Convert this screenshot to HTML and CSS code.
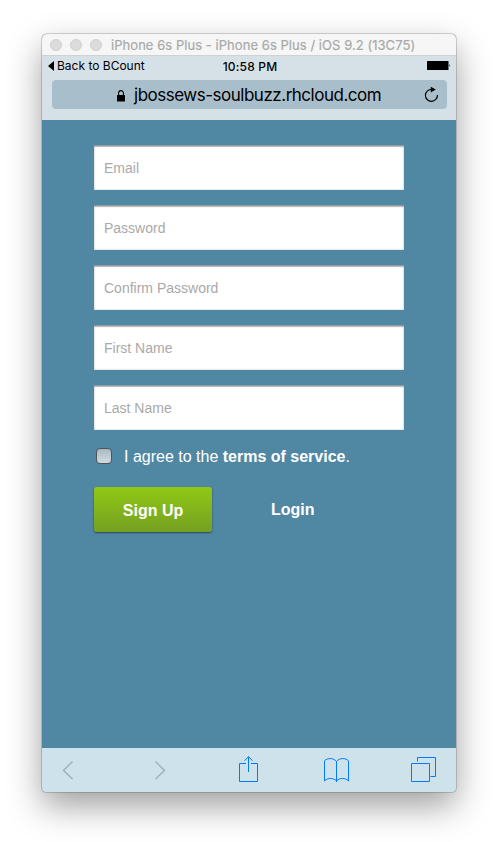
FILE: index.html
```
<!DOCTYPE html>
<html lang="en">
<head>
<meta charset="utf-8">
<title>Sign Up</title>
<link rel="stylesheet" href="styles.css">
</head>
<body>
<main class="phone">
  <header class="titlebar">
    <i class="dot"></i><i class="dot"></i><i class="dot"></i>
    <span class="title">iPhone 6s Plus - iPhone 6s Plus / iOS 9.2 (13C75)</span>
  </header>
  <section class="browser">
    <div class="status">
      <div class="back"><svg width="6" height="10" viewBox="0 0 6 10"><path d="M6 0v10L0 5z"/></svg><span>Back to BCount</span></div>
      <span class="time">10:58 PM</span>
      <svg class="battery" width="24" height="9" viewBox="0 0 24 9"><rect width="21.5" height="9" rx=".5"/><path d="M22.5 3q1.500 1.500 0 3z"/></svg>
    </div>
    <div class="address">
      <svg class="lock" width="8" height="12" viewBox="0 0 8 12"><rect y="5" width="8" height="6.500" rx=".5"/><path d="M1.600 5.500V3a2.400 2.400 0 0 1 4.800 0v2.500" fill="none" stroke="#000" stroke-width="1.1"/></svg>
      <span class="url">jbossews-soulbuzz.rhcloud.com</span>
      <svg class="reload" width="15" height="17" viewBox="0 0 15 17"><path d="M8 3.400A6 6 0 1 0 13.400 9" fill="none" stroke="#000" stroke-width="1.2"/><path d="M6.800 0.800 11.800 3.600 6.800 6.400z"/></svg>
    </div>
  </section>
  <form class="form">
    <input class="field" type="text" placeholder="Email">
    <input class="field" type="text" placeholder="Password">
    <input class="field" type="text" placeholder="Confirm Password">
    <input class="field" type="text" placeholder="First Name">
    <input class="field" type="text" placeholder="Last Name">
    <label class="agree"><input class="check" type="checkbox"><span class="terms">I agree to the <b>terms of service</b>.</span></label>
    <div class="actions">
      <button class="signup" type="button">Sign Up</button>
      <a class="login">Login</a>
    </div>
  </form>
  <nav class="toolbar">
    <svg class="icon muted" width="12" height="20" viewBox="0 0 12 20"><path d="M10.500 1.500 1.500 10.500 10.500 19"/></svg>
    <svg class="icon muted forward" width="12" height="20" viewBox="0 0 12 20"><path d="M1.500 1.500 10.500 10.500 1.500 19"/></svg>
    <svg class="icon share" width="19" height="26" viewBox="0 0 19 26"><path d="M7 7.500H.5v18h18v-18H12M9.500 16V.7M5.500 4.700l4-4 4 4"/></svg>
    <svg class="icon book" width="25" height="26" viewBox="0 0 25 26"><path d="M12.500 5.500C9.500 1.700 3.500 1.700.5 4.800v20.200c3-3.400 9-3.400 12 0 3-3.400 9-3.400 12 0V4.800c-3-3.100-9-3.100-12 .7zV26"/></svg>
    <svg class="icon tabs" width="25" height="26" viewBox="0 0 25 26"><path d="M.5 7.500h18v18H.5zM6.500 5.500v-4h18v19h-5"/></svg>
  </nav>
</main>
</body>
</html>
```
FILE: styles.css
```
* { box-sizing: border-box; }
body {
  margin: 0;
  padding: 34px 42px 0;
  height: 842px;
  overflow: hidden;
  background: #fff;
  font-family: "Liberation Sans", Arial, sans-serif;
}
svg { display: block; flex: none; }
.phone {
  width: 414px;
  height: 758px;
  border-radius: 5px 5px 4px 4px;
  background: #5088a4;
  box-shadow: 0 0 0 1px rgba(0,0,0,.16), 0 14px 34px rgba(0,0,0,.38);
  display: flex;
  flex-direction: column;
}
.titlebar {
  height: 22px;
  background: #f6f6f6;
  border-bottom: 1px solid #d1d1d1;
  border-radius: 5px 5px 0 0;
  display: flex;
  align-items: center;
  padding-left: 8px;
}
.dot {
  width: 12px;
  height: 12px;
  margin-right: 8px;
  border-radius: 50%;
  background: #dcdcdc;
  border: 1px solid #d0d0d0;
}
.title {
  margin: 2px 0 0 1px;
  font: 13px/21px Inter, sans-serif;
  color: #a9a9a9;
  white-space: nowrap;
  letter-spacing: .05px;
  -webkit-text-stroke: .2px #a9a9a9;
}
.browser {
  height: 64px;
  background: #d6e1e7;
  font-family: Inter, sans-serif;
  color: #000;
}
.status {
  height: 20px;
  display: grid;
  grid-template-columns: 1fr auto 1fr;
  align-items: center;
  padding: 0 5px 0 6px;
  font-size: 12px;
}
.back { display: flex; align-items: center; gap: 3px; white-space: nowrap; }
.back span { padding-bottom: 2px; }
.time { font-weight: 500; letter-spacing: .17px; padding: 1px 0 0 1px; }
.battery { justify-self: end; margin-bottom: 1px; }
.address {
  height: 29px;
  margin: 4px 9px 0 10px;
  padding: 0 8px 0 65px;
  border-radius: 4px;
  background: #a9becb;
  display: flex;
  align-items: center;
}
.lock { margin-top: 2px; }
.url { margin: 1px 0 0 9px; font-size: 17px; letter-spacing: -.49px; white-space: nowrap; }
.reload { margin-left: auto; }
.form {
  height: 628px;
  padding: 26px 52px 0;
  display: flex;
  flex-direction: column;
}
.field {
  width: 310px;
  height: 44px;
  margin: 0 0 16px;
  padding: 0 10px;
  border: 0;
  border-radius: 0;
  background: #fff;
  box-shadow: inset 0 1px 1px rgba(0,0,0,.22), inset 0 0 2px rgba(0,0,0,.3), 0 -1px 0 #8f9ba1;
  font: 14px "Liberation Sans", sans-serif;
}
.field::placeholder { color: #a9a9a9; opacity: 1; }
.agree {
  display: flex;
  align-items: center;
  gap: 12px;
  height: 20px;
  padding-left: 2px;
  color: #fff;
  font-size: 16px;
  white-space: nowrap;
}
.terms { padding-top: 2px; }
.check {
  appearance: none;
  width: 16px;
  height: 16px;
  margin: 0;
  border: 1px solid #505459;
  border-radius: 4px;
  background: linear-gradient(#a9bac3, #d0dbe0);
}
.actions { display: flex; margin-top: 21px; }
.signup {
  width: 118px;
  height: 45px;
  padding: 2px 0 0;
  border: 0;
  border-radius: 3px;
  background: linear-gradient(#91c814, #74a022);
  box-shadow: 0 1px 2px rgba(0,0,0,.5);
  color: #fff;
  font: bold 16px "Liberation Sans", sans-serif;
}
.login { margin-left: 59px; color: #fff; font-weight: bold; font-size: 16px; line-height: 45px; }
.toolbar {
  height: 44px;
  padding: 0 20px;
  border-radius: 0 0 4px 4px;
  background: #cee2eb;
  display: flex;
  align-items: center;
}
.forward { margin-left: 80px; }
.share { margin: -2px 0 0 73px; }
.book { margin: -2px 0 0 66px; }
.tabs { margin: -2px 0 0 62px; }
.icon { fill: none; stroke: #007aff; stroke-width: 1; }
.muted { stroke: #9fafb7; stroke-width: 1.400; }
```
